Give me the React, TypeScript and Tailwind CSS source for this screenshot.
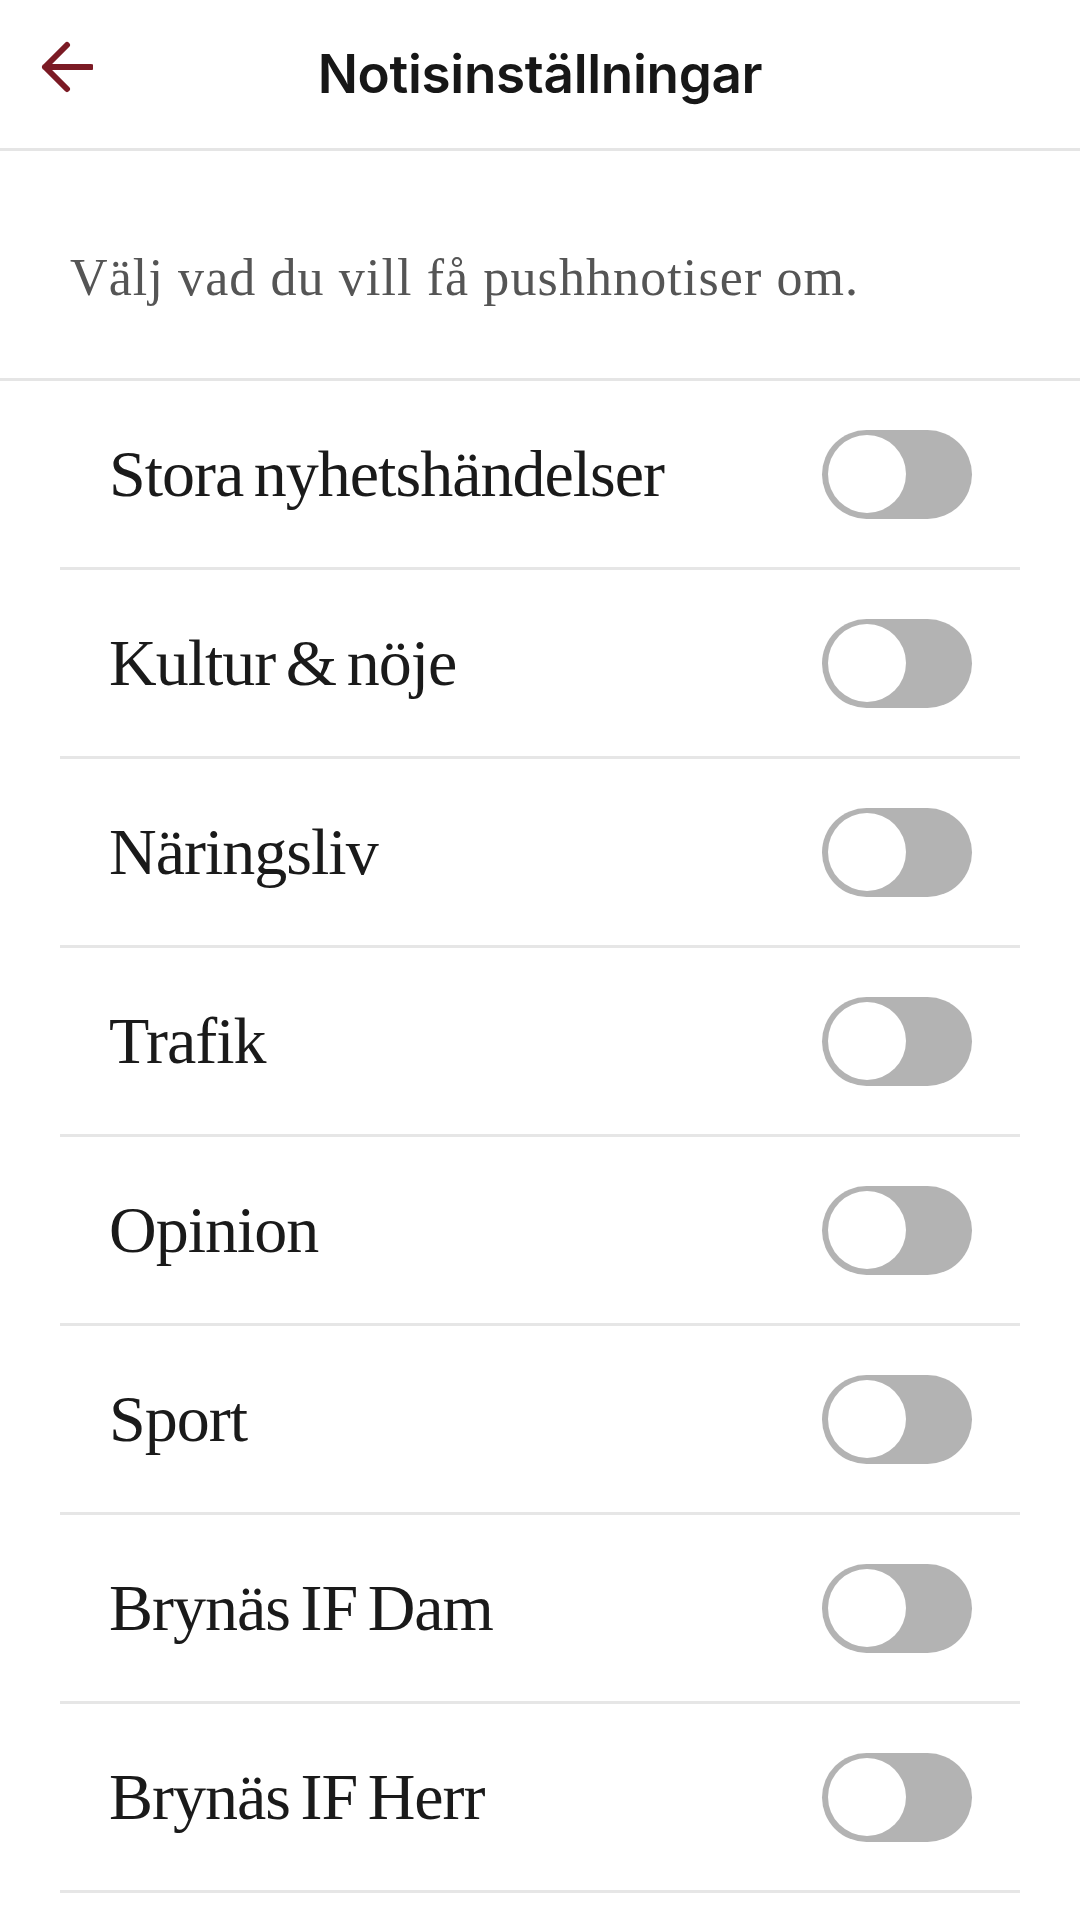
import React from "react";

const items = [
  "Stora nyhetshändelser",
  "Kultur & nöje",
  "Näringsliv",
  "Trafik",
  "Opinion",
  "Sport",
  "Brynäs IF Dam",
  "Brynäs IF Herr",
];

function Toggle() {
  return (
    <div className="w-[150px] h-[89px] rounded-full bg-[#b3b3b3] p-[6px] flex items-center shrink-0">
      <div className="w-[78px] h-[78px] rounded-full bg-white" />
    </div>
  );
}

export default function App() {
  return (
    <div className="w-[1080px] h-[1920px] bg-white overflow-hidden">
      <header className="relative h-[151px] border-b-[3px] border-[#e5e5e5] flex items-center justify-center">
        <button className="absolute left-[41px] top-[41px] w-[52px] h-[52px] flex items-center justify-center">
          <svg width="52" height="52" viewBox="0 0 52 52" fill="none">
            <path
              d="M50 26H4 M26 4 L4 26 L26 48"
              stroke="#7b1a24"
              strokeWidth="6"
              strokeLinecap="round"
              strokeLinejoin="round"
            />
          </svg>
        </button>
        <h1
          className="text-[53px] font-semibold text-[#171717] leading-none tracking-[-0.3px]"
          style={{ fontFamily: "Inter, 'Liberation Sans', sans-serif" }}
        >
          Notisinställningar
        </h1>
      </header>
      <div className="h-[230px] border-b-[3px] border-[#e5e5e5] flex items-center pl-[70px] pt-[26px]">
        <p
          className="text-[52px] text-[#555555] leading-none tracking-[1.1px]"
          style={{ fontFamily: "'Liberation Serif', serif" }}
        >
          Välj vad du vill få pushhnotiser om.
        </p>
      </div>
      <ul className="mx-[60px]">
        {items.map((t) => (
          <li
            key={t}
            className="h-[189px] border-b-[3px] border-[#e6e6e6] flex items-center justify-between pl-[49px] pr-[48px]"
          >
            <span
              className="text-[66px] text-[#1a1a1a] leading-none tracking-[-1px] [word-spacing:-5px]"
              style={{ fontFamily: "'Liberation Serif', serif" }}
            >
              {t}
            </span>
            <Toggle />
          </li>
        ))}
      </ul>
    </div>
  );
}
